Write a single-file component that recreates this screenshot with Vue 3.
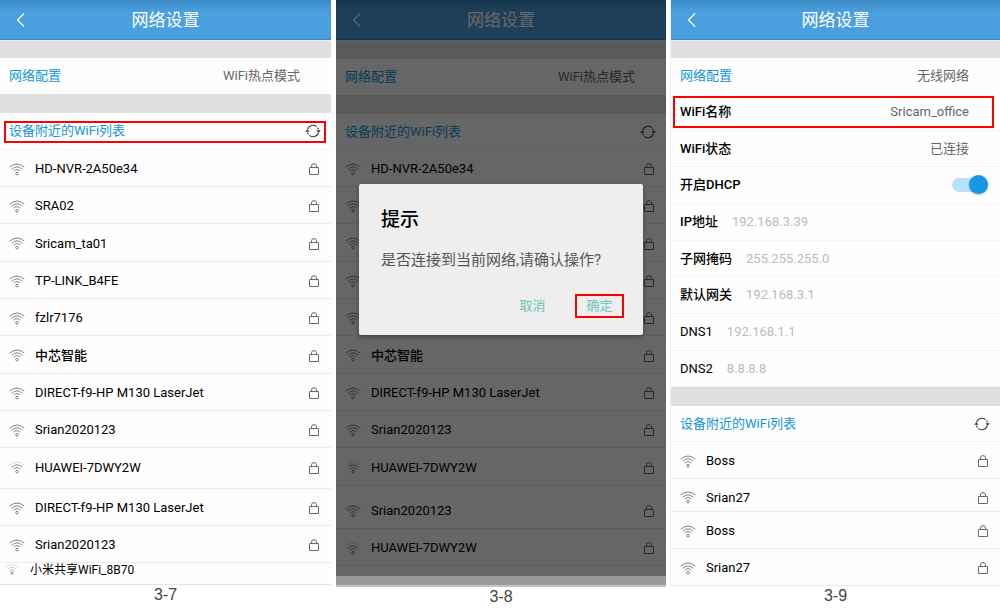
<script setup>
import { ref } from 'vue'

const hotspotNetworks = [
  { name: 'HD-NVR-2A50e34' },
  { name: 'SRA02' },
  { name: 'Sricam_ta01' },
  { name: 'TP-LINK_B4FE' },
  { name: 'fzlr7176' },
  { name: '中芯智能', strong: true },
  { name: 'DIRECT-f9-HP M130 LaserJet' },
  { name: 'Srian2020123' },
  { name: 'HUAWEI-7DWY2W', weak: true, space: 'after' },
  { name: 'DIRECT-f9-HP M130 LaserJet' },
  { name: 'Srian2020123' },
  { name: '小米共享WiFi_8B70', weak: true, clipped: true }
]

// Rows 2 to 5 lie behind the dialog.
const dimmedNetworks = [
  ...hotspotNetworks.slice(0, 8).map((net, i) => ({ ...net, covered: i > 0 && i < 5 })),
  { name: 'HUAWEI-7DWY2W', weak: true },
  { name: 'Srian2020123', space: 'before' },
  { name: 'HUAWEI-7DWY2W', weak: true }
]

const officeNetworks = [
  { name: 'Boss' },
  { name: 'Srian27', short: true },
  { name: 'Boss' },
  { name: 'Srian27' }
]

const addresses = ref([
  { id: 'ip', label: 'IP地址', value: '192.168.3.39' },
  { id: 'mask', label: '子网掩码', value: '255.255.255.0' },
  { id: 'gateway', label: '默认网关', value: '192.168.3.1' },
  { id: 'dns1', label: 'DNS1', value: '192.168.1.1', plain: true },
  { id: 'dns2', label: 'DNS2', value: '8.8.8.8', plain: true }
])

const dhcp = ref(true)

const screens = [
  { id: 'list', caption: '3-7', mode: 'WiFi热点模式', networks: hotspotNetworks },
  { id: 'confirm', caption: '3-8', mode: 'WiFi热点模式', networks: dimmedNetworks },
  { id: 'connected', caption: '3-9', mode: '无线网络', networks: officeNetworks }
]
</script>

<template>
  <main class="board">
    <figure v-for="screen in screens" :key="screen.id" class="figure">
      <section class="phone" :class="screen.id">
        <header class="bar">
          <button class="back" type="button" aria-label="返回">
            <svg width="10" height="16" viewBox="0 0 10 16"><path d="M9 1.5 2.5 8 9 14.5" fill="none" stroke="#fff" stroke-width="1.2" /></svg>
          </button>
          <h1>网络设置</h1>
        </header>
        <div class="band first"></div>
        <div class="setting mode">
          <span class="accent">网络配置</span>
          <span class="value">{{ screen.mode }}</span>
        </div>

        <template v-if="screen.id === 'connected'">
          <div class="setting marked">
            <span class="label">WiFi名称</span>
            <span class="value">Sricam_office</span>
          </div>
          <div class="setting">
            <span class="label">WiFi状态</span>
            <span class="value">已连接</span>
          </div>
          <div class="setting">
            <label class="label" for="dhcp">开启DHCP</label>
            <input id="dhcp" v-model="dhcp" class="switch" type="checkbox" role="switch">
          </div>
          <div v-for="item in addresses" :key="item.id" class="setting">
            <label class="label" :class="{ plain: item.plain }" :for="item.id">{{ item.label }}</label>
            <input :id="item.id" v-model="item.value" class="address" type="text">
          </div>
        </template>

        <div class="band"></div>
        <div class="heading" :class="{ marked: screen.id === 'list' }">
          <h2 class="accent">设备附近的WiFi列表</h2>
          <button class="refresh" type="button" aria-label="刷新">
            <svg width="16" height="14" viewBox="0 0 16 14" fill="none" stroke="#333" stroke-width="1.1">
              <path d="M2.6 5.2A5.7 5.7 0 0 1 11.6 2.6" />
              <path d="M12.6 3.6A5.7 5.7 0 0 1 13.5 5.4" />
              <path d="M13.4 8.8A5.7 5.7 0 0 1 4.4 11.4" />
              <path d="M3.4 10.4A5.7 5.7 0 0 1 2.5 8.6" />
              <path d="M.2 7.8 2.3 5.2 4.6 7.8ZM11.4 6.2 13.7 8.8 15.8 6.2Z" fill="#333" stroke="none" />
            </svg>
          </button>
        </div>

        <ul class="networks">
          <li
            v-for="(net, i) in screen.networks"
            :key="i"
            :class="[net.space, { clipped: net.clipped, short: net.short, covered: net.covered, strong: net.strong }]"
          >
            <button class="network" type="button" :aria-label="net.name">
              <svg class="wifi" width="16" height="13" viewBox="0 0 16 13" fill="none" stroke="#808080" stroke-width="1">
                <path d="M.7 4.2Q8-2.2 15.3 4.2" :opacity="net.weak ? 0.3 : 1" />
                <path d="M2.8 6.2Q8 1.5 13.2 6.2" :opacity="net.clipped ? 0.4 : 1" />
                <path d="M4.8 8.2Q8 5.1 11.2 8.2" :opacity="net.clipped ? 0.6 : 1" />
                <circle cx="8" cy="10.6" r="1.3" />
              </svg>
              <span class="name">{{ net.name }}</span>
              <svg v-if="!net.clipped" class="lock" width="10" height="12" viewBox="0 0 10 12" fill="none" stroke="#6a6a6a" stroke-width="1">
                <path d="M.5 4.5h9v7h-9zM2.5 4.5V3a2.5 2.4 0 0 1 5 0v1.5" />
              </svg>
            </button>
          </li>
        </ul>

        <div v-if="screen.id === 'confirm'" class="scrim">
          <div class="dialog" role="dialog" aria-labelledby="tip-title">
            <h3 id="tip-title">提示</h3>
            <p>是否连接到当前网络,请确认操作?</p>
            <div class="actions">
              <button type="button">取消</button>
              <button class="confirm-action" type="button">确定</button>
            </div>
          </div>
        </div>
      </section>
      <div v-if="screen.id === 'confirm'" class="navstrip"></div>
      <figcaption>{{ screen.caption }}</figcaption>
    </figure>
  </main>
</template>

<style>
body {
  margin: 0;
  background: #fff;
}
</style>

<style scoped>
* {
  box-sizing: border-box;
}

.board {
  display: grid;
  grid-template-columns: 331fr 330fr 329fr;
  gap: 5px;
  font-family: Roboto, "Noto Sans CJK SC", sans-serif;
  font-size: 13px;
  line-height: 18px;
  color: #000;
}

button,
input {
  font: inherit;
  color: inherit;
  margin: 0;
  padding: 0;
  border: 0;
  background: none;
}

h1,
h2,
h3,
p,
ul,
figure {
  margin: 0;
  padding: 0;
}

svg {
  display: block;
  flex: none;
}

.figure {
  min-width: 0;
}

.phone {
  position: relative;
  background: #fefefe;
}

.bar {
  display: grid;
  grid-template-columns: 40px 1fr 40px;
  align-items: center;
  height: 40px;
  background: linear-gradient(#3c8bc4, #4a9fdf 12px, #4a9fdf);
  border-bottom: 1px solid #2f8fd0;
}

.back {
  padding-left: 15px;
}

h1 {
  color: #fff;
  font-size: 17px;
  line-height: 24px;
  font-weight: 400;
  text-align: center;
}

.band {
  height: 19px;
  background: #e0e0e0;
}

.band.first {
  height: 18px;
  border-top: 1px solid #f0f0f0;
}

.setting,
.heading {
  position: relative;
  display: flex;
  align-items: center;
  height: 36px;
  padding: 0 12px 0 9px;
}

.heading {
  justify-content: space-between;
  border-bottom: 1px solid #f3f3f3;
}

.accent {
  color: #1296db;
  font-size: 13px;
  font-weight: 400;
}

.value {
  margin-left: auto;
  padding-right: 19px;
  color: #666;
}

.refresh {
  margin-right: -2px;
}

.marked::after {
  content: "";
  position: absolute;
  inset: 8px 5px 6px 4px;
  border: 2px solid #f00;
  pointer-events: none;
}

.networks {
  list-style: none;
}

.networks li {
  height: 37px;
  border-bottom: 1px solid #ebebeb;
}

.networks li:nth-child(3n) {
  height: 38px;
}

.networks li.after {
  height: 41px;
  padding-bottom: 3px;
}

.networks li.before {
  height: 43px;
  padding-top: 6px;
}

.networks li.short {
  height: 33px;
}

.networks li.clipped {
  height: 22px;
  padding-bottom: 8px;
  border-bottom: 1px solid #e4e4e4;
}

.network {
  display: flex;
  align-items: center;
  width: 100%;
  height: 100%;
  padding: 2px 12px 0 9px;
  text-align: left;
}

.short .network {
  padding-top: 5px;
}

.name {
  flex: 1;
  margin-left: 10px;
}

.strong .name {
  font-weight: 500;
}

.covered .name {
  visibility: hidden;
}

.clipped .network {
  padding: 0 5px;
  font-size: 12px;
}

.clipped .wifi {
  width: 14px;
}

.clipped .name {
  margin-left: 11px;
}

/* list screen */
.list .heading {
  height: 37px;
}

/* connected screen */
.connected {
  box-shadow: -1px 0 #eee;
}

.connected .setting {
  height: 37px;
  border-bottom: 1px solid #f3f3f3;
}

.connected .setting:nth-child(3n + 2) {
  height: 36px;
}

.connected .setting.mode {
  height: 36px;
  border-bottom: 0;
}

.connected .marked::after {
  inset: 2px 6px 2px 2px;
}

.connected .networks li:nth-child(3n) {
  height: 37px;
}

.label {
  font-weight: 500;
}

.label.plain {
  font-weight: 400;
}

.address {
  flex: 1;
  min-width: 0;
  margin-left: 14px;
  color: #bbb;
}

.switch {
  appearance: none;
  position: relative;
  width: 36px;
  height: 20px;
  margin-left: auto;
}

.switch::before {
  content: "";
  position: absolute;
  inset: 3px 4px 3px 0;
  border-radius: 7px;
  background: #b5e2f8;
}

.switch::after {
  content: "";
  position: absolute;
  top: 0;
  left: 0;
  width: 19px;
  height: 19px;
  border-radius: 50%;
  background: #999;
}

.switch:checked::after {
  left: auto;
  right: 0;
  background: #1597e5;
  box-shadow: 0 1px 2px #0004;
}

/* confirm screen */
.confirm {
  padding-bottom: 10px;
}

.confirm .band.first {
  height: 19px;
}

.scrim {
  position: absolute;
  inset: 0;
  padding: 184px 23px 0;
  background: rgba(0, 0, 0, 0.6);
}

.dialog {
  height: 151px;
  padding: 22px 19px 0 22px;
  background: #eee;
  border-radius: 2px;
  box-shadow: 0 2px 5px #0005;
}

.dialog h3 {
  font-size: 19px;
  line-height: 28px;
  font-weight: 500;
}

.dialog p {
  margin-top: 15px;
  font-size: 15px;
  line-height: 22px;
  color: #555;
  white-space: nowrap;
}

.actions {
  display: flex;
  justify-content: flex-end;
  gap: 18px;
  margin-top: 23px;
}

.actions button {
  width: 49px;
  height: 24px;
  color: #6fc4b8;
}

.actions .confirm-action {
  border: 2px solid #f00;
}

.navstrip {
  height: 11px;
  background: #999;
  border-bottom: 2px solid #c4c4c4;
}

figcaption {
  font-family: "Liberation Sans", sans-serif;
  font-size: 16px;
  line-height: 20px;
  color: #444;
  text-align: center;
}
</style>
